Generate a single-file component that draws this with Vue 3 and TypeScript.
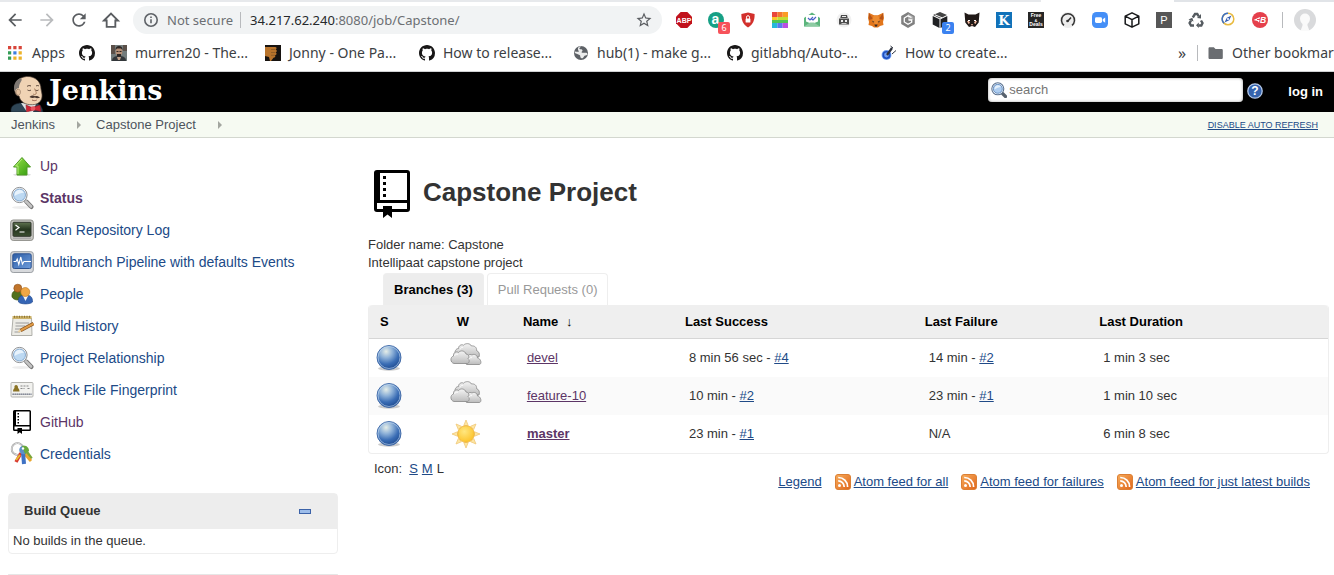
<script setup lang="ts">
interface Glyph { text: string; x: number; y: number; size: number; serif?: boolean; italic?: boolean; light?: boolean }
interface Extension { icon: string; glyphs?: Glyph[]; badge?: string; tone?: string }
interface Bookmark { icon: string; label: string; kind: 'apps' | 'bare' | 'full' }
interface Task { icon: string; label: string; visited?: boolean; current?: boolean }
interface Build { age: string; link?: string }
interface Branch { name: string; weather: string; success: Build; failure: Build; duration: string; primary?: boolean }

const navButtons = [
  { icon: 'back', label: 'Back' },
  { icon: 'forward', label: 'Forward' },
  { icon: 'reload', label: 'Reload' },
  { icon: 'home', label: 'Home' },
]

const extensions: Extension[] = [
  { icon: 'abp', glyphs: [{ text: 'ABP', x: 8, y: 10.6, size: 7 }] },
  { icon: 'askteal', glyphs: [{ text: 'a', x: 7.5, y: 12, size: 14 }], badge: '6', tone: 'red' },
  { icon: 'shield' },
  { icon: 'rainbow' },
  { icon: 'mail' },
  { icon: 'robot' },
  { icon: 'fox' },
  { icon: 'hexg' },
  { icon: 'darkcube', badge: '2', tone: 'blue' },
  { icon: 'cat' },
  { icon: 'kblue', glyphs: [{ text: 'K', x: 8, y: 13, size: 13, serif: true }] },
  { icon: 'deals', glyphs: [{ text: 'Free', x: 8, y: 5, size: 5 }, { text: '&', x: 8, y: 9.5, size: 4 }, { text: 'Deals', x: 8, y: 14, size: 5 }] },
  { icon: 'gauge' },
  { icon: 'zoomcam' },
  { icon: 'cube' },
  { icon: 'pgray', glyphs: [{ text: 'P', x: 8, y: 12, size: 11, light: true }] },
  { icon: 'recycle' },
  { icon: 'compass' },
  { icon: 'redb', glyphs: [{ text: 'B', x: 11, y: 11, size: 8.5, italic: true }] },
]

const bookmarks: Bookmark[] = [
  { icon: 'apps', label: 'Apps', kind: 'apps' },
  { icon: 'octocat', label: '', kind: 'bare' },
  { icon: 'portrait', label: 'murren20 - The...', kind: 'full' },
  { icon: 'fist', label: 'Jonny - One Pa...', kind: 'full' },
  { icon: 'octocat', label: 'How to release...', kind: 'full' },
  { icon: 'globe', label: 'hub(1) - make g...', kind: 'full' },
  { icon: 'octocat', label: 'gitlabhq/Auto-...', kind: 'full' },
  { icon: 'guitar', label: 'How to create...', kind: 'full' },
]

const tasks: Task[] = [
  { icon: 'up', label: 'Up', visited: true },
  { icon: 'search', label: 'Status', visited: true, current: true },
  { icon: 'terminal', label: 'Scan Repository Log' },
  { icon: 'monitor', label: 'Multibranch Pipeline with defaults Events' },
  { icon: 'people', label: 'People' },
  { icon: 'notepad', label: 'Build History' },
  { icon: 'search', label: 'Project Relationship' },
  { icon: 'idcard', label: 'Check File Fingerprint' },
  { icon: 'repo', label: 'GitHub', visited: true },
  { icon: 'keys', label: 'Credentials' },
]

const branches: Branch[] = [
  { name: 'devel', weather: 'cloud', success: { age: '8 min 56 sec', link: '#4' }, failure: { age: '14 min', link: '#2' }, duration: '1 min 3 sec' },
  { name: 'feature-10', weather: 'cloud', success: { age: '10 min', link: '#2' }, failure: { age: '23 min', link: '#1' }, duration: '1 min 10 sec' },
  { name: 'master', weather: 'sun', success: { age: '23 min', link: '#1' }, failure: { age: 'N/A' }, duration: '6 min 8 sec', primary: true },
]

const feeds = ['Atom feed for all', 'Atom feed for failures', 'Atom feed for just latest builds']
</script>

<template>
  <svg class="defs" aria-hidden="true">
    <defs>
      <radialGradient id="gOrb" cx="38%" cy="25%" r="75%">
        <stop offset="0" stop-color="#e6eee8" /><stop offset=".35" stop-color="#8fb2d8" />
        <stop offset=".7" stop-color="#3a6db5" /><stop offset="1" stop-color="#1f4c92" />
      </radialGradient>
      <radialGradient id="gSun" cx="40%" cy="35%" r="70%">
        <stop offset="0" stop-color="#ffe780" /><stop offset="1" stop-color="#fcc125" />
      </radialGradient>
      <linearGradient id="gCloud" x1="0" y1="0" x2="0" y2="1">
        <stop offset="0" stop-color="#f4f4f4" /><stop offset="1" stop-color="#bcbcbc" />
      </linearGradient>
      <linearGradient id="gRss" x1="0" y1="0" x2="1" y2="1">
        <stop offset="0" stop-color="#f7ad5c" /><stop offset="1" stop-color="#e0651a" />
      </linearGradient>
      <linearGradient id="gUp" x1="0" y1="0" x2="1" y2="1">
        <stop offset="0" stop-color="#9be34a" /><stop offset="1" stop-color="#2f9a0c" />
      </linearGradient>
      <linearGradient id="gMon" x1="0" y1="0" x2="1" y2="1">
        <stop offset="0" stop-color="#2c5da6" /><stop offset="1" stop-color="#6f9ddb" />
      </linearGradient>
      <linearGradient id="gTerm" x1="0" y1="0" x2="0" y2="1">
        <stop offset="0" stop-color="#5f7350" /><stop offset=".5" stop-color="#26361f" /><stop offset="1" stop-color="#3a4f30" />
      </linearGradient>
    </defs>

    <symbol id="back" viewBox="0 0 24 24"><path fill="#5a5d61" d="M20 11H7.83l5.59-5.59L12 4l-8 8 8 8 1.41-1.41L7.83 13H20z" /></symbol>
    <symbol id="forward" viewBox="0 0 24 24"><path fill="#b9bbbd" d="M4 11h12.17l-5.59-5.59L12 4l8 8-8 8-1.41-1.41L16.17 13H4z" /></symbol>
    <symbol id="reload" viewBox="0 0 24 24"><path fill="#5a5d61" d="M17.65 6.35C16.2 4.9 14.21 4 12 4c-4.42 0-7.99 3.58-7.99 8s3.57 8 7.99 8c3.73 0 6.84-2.55 7.73-6h-2.08c-.82 2.33-3.04 4-5.65 4-3.31 0-6-2.69-6-6s2.69-6 6-6c1.66 0 3.14.69 4.22 1.78L13 11h7V4z" /></symbol>
    <symbol id="home" viewBox="0 0 24 24"><path fill="none" stroke="#5a5d61" stroke-width="2.2" d="M3.6 12.6 12 4.2l8.4 8.4h-3.2v7.6H6.8v-7.6z" /></symbol>
    <symbol id="info" viewBox="0 0 16 16"><circle cx="8" cy="8" r="6.2" fill="none" stroke="#5f6368" stroke-width="1.6" /><path stroke="#5f6368" stroke-width="1.6" d="M8 7.2v4M8 4.4V6" /></symbol>
    <symbol id="star" viewBox="0 0 24 24"><path fill="#5a5d61" d="M22 9.24l-7.19-.62L12 2 9.19 8.63 2 9.24l5.46 4.73L5.82 21 12 17.27 18.18 21l-1.63-7.03zM12 15.4l-3.76 2.27 1-4.28-3.32-2.88 4.38-.38L12 6.1l1.71 4.04 4.38.38-3.32 2.88 1 4.28z" /></symbol>

    <symbol id="abp" viewBox="0 0 16 16"><path fill="#c1121c" d="M4.7 0h6.6L16 4.7v6.6L11.3 16H4.7L0 11.3V4.7z" /></symbol>
    <symbol id="askteal" viewBox="0 0 16 16"><circle cx="8" cy="8" r="8" fill="#17a085" /></symbol>
    <symbol id="shield" viewBox="0 0 16 16"><path fill="#d2302c" d="M8 .6 14.6 2c.2 6-1.600 10.500-6.600 13.600C3 12.500 1.200 8 1.400 2z" /><rect x="5.600" y="6.600" width="4.800" height="3.800" rx=".5" fill="#fff" /><path fill="none" stroke="#fff" d="M6.500 6.800V5.200a1.500 1.500 0 0 1 3 0v1.600" /></symbol>
    <symbol id="rainbow" viewBox="0 0 16 16"><path fill="#e9473c" d="M0 0h5.300v5H0z" /><path fill="#f5762f" d="M5.300 0h5.400v5H5.300z" /><path fill="#fb9c25" d="M10.700 0H16v5h-5.300z" /><path fill="#fbc62c" d="M0 5h5.300v3H0z" /><path fill="#c2dd35" d="M5.300 5H16v3H5.300z" /><path fill="#4fc653" d="M0 8h16v3H0z" /><path fill="#25b8dc" d="M0 11h5.300v5H0z" /><path fill="#587cec" d="M5.300 11h5.400v5H5.300z" /><path fill="#ba4fe0" d="M10.700 11H16v5h-5.300z" /></symbol>
    <symbol id="mail" viewBox="0 0 16 16"><path fill="#5cb57d" d="M0 6 8 .5 16 6v8.500H0z" /><path fill="#fff" d="M2 3h12v6.500L8 12 2 9.500z" /><path fill="#8dcba3" d="m0 14.500 6-4h4l6 4z" /><path fill="none" stroke="#4b62c8" stroke-width="1.200" d="m4 6 2 2 3-3M7.500 7 9 8l3-3" /></symbol>
    <symbol id="robot" viewBox="0 0 16 16"><circle cx="8" cy="8" r="7.500" fill="#f1f1f1" /><path fill="#4c4c4c" d="M5 3h6l.7 3H4.300zM3 6.500h10v6H3z" /><path fill="#eee" d="M5 8h2v2H5zm4 0h2v2H9zm-3.500 3h5v.8h-5zM6 4h4v1H6z" /></symbol>
    <symbol id="fox" viewBox="0 0 16 16"><path fill="#e2761b" d="m.8.800 5.200 2.500h4L15.200.800 16 6l-1 4 .5 3-3.500 1-2 1.500H6L4 14l-3.500-1 .5-3-1-4z" /><path fill="#b4531a" d="m.8.800 4 6L1 8zm14.400 0-4 6L15 8z" /><path fill="#ee8c30" d="M5.500 4h5L12 9l-4 4-4-4z" /><path fill="#3a2c25" d="M4 8.500 6.500 10 5 10.500zm8 0L9.500 10l1.500.5zM6.500 12.500h3l-.5 2H7z" /></symbol>
    <symbol id="hexg" viewBox="0 0 16 16"><path fill="#808080" d="m8 0 6.800 4v8L8 16l-6.800-4V4z" /><path fill="#a8a8a8" d="m8 1.500 5.500 3.200v3.300H8z" /><path fill="none" stroke="#fff" stroke-width="1.300" d="M11.500 5.500 8 3.800 4.300 6v4L8 12.200l3.700-2V8H8.500" /></symbol>
    <symbol id="darkcube" viewBox="0 0 16 16"><path fill="#444" d="m8 0 7 3-7 3.500L1 3z" /><path fill="#202124" d="M.7 4 7.500 7.300V16L.7 12.500zM15.300 4 8.500 7.300V16l6.800-3.500z" /><path stroke="#fff" d="m3 2.800 7 3" /></symbol>
    <symbol id="cat" viewBox="0 0 16 16"><path fill="#201917" d="m.5.500 4 2h7l4-2-.8 10L11 15l-3-1-3 1-3.700-4.500z" /><path fill="#efb59c" d="M3 9h2l1 2-1.500 1zm10 0h-2l-1 2 1.500 1zM7 12h2l-1 2z" /><path fill="#fff" d="M4 8h2v1H4zm6 0h2v1h-2z" /></symbol>
    <symbol id="kblue" viewBox="0 0 16 16"><path fill="#1172b9" d="M0 0h16v16H0z" /></symbol>
    <symbol id="deals" viewBox="0 0 16 16"><path fill="#262626" d="M0 0h16v16H0z" /></symbol>
    <symbol id="gauge" viewBox="0 0 16 16"><circle cx="8" cy="8" r="8" fill="#ededed" /><path fill="none" stroke="#333" stroke-width="1.500" d="M4 13.300a6.500 6.500 0 1 1 8 0M7.500 9.500 11 5.500" /><circle cx="7.500" cy="9" r="1.300" fill="#333" /></symbol>
    <symbol id="zoomcam" viewBox="0 0 16 16"><rect width="16" height="16" rx="4.500" fill="#458ff7" /><rect x="3" y="5.300" width="7" height="5.600" rx="1.400" fill="#fff" /><path fill="#fff" d="m10.700 7.300 2.500-1.800v5.200l-2.500-1.800z" /></symbol>
    <symbol id="cube" viewBox="0 0 16 16"><path fill="none" stroke="#17181a" stroke-width="1.500" stroke-linejoin="round" d="m8 .8 6.800 3.400v7.600L8 15.200l-6.800-3.400V4.200zM1.200 4.200 8 7.700l6.800-3.500M8 7.700v7.500" /></symbol>
    <symbol id="pgray" viewBox="0 0 16 16"><path fill="#565656" d="M0 0h16v16H0z" /></symbol>
    <symbol id="recycle" viewBox="0 0 16 16"><g fill="none" stroke="#555b60" stroke-width="2.400"><path d="M4.800 5.500 7 2h2.300l1.500 2.500" /><path d="m13 8.500 1.500 2.500-1.200 2.500H10.500" /><path d="M6 13.500H3L1.600 11 3 8.500" /></g><path fill="#555b60" d="m9 6 4 .5L13 2zm1.800 4.500v5.500L8 13.300zM.5 7.500l3.800-1.800L5.500 9.500z" /></symbol>
    <symbol id="compass" viewBox="0 0 16 16"><circle cx="8" cy="7" r="5.800" fill="none" stroke="#e9bb40" stroke-width="1.500" /><path fill="none" stroke="#3a6fc8" stroke-width="1.500" d="M8 1.200a5.800 5.800 0 0 0-4 10" /><path fill="#355fb4" d="m11.500 3.500-2.300 4.800-4.700 2.200L6.800 5.700z" /><circle cx="8" cy="7" r="1" fill="#fff" /></symbol>
    <symbol id="redb" viewBox="0 0 16 16"><circle cx="8" cy="8" r="8" fill="#e5404c" /><path fill="#fff" d="m1.500 8 6.500-3-.5 2H5v1h2.500L7 10.500 5.500 9z" /></symbol>
    <symbol id="avatar" viewBox="0 0 22 22"><circle cx="11" cy="11" r="11" fill="#d9dadc" /><path fill="#fafafa" d="M11 4.500a5 5 0 0 1 5 5c0 2.500-1.200 4.200-2.500 5.500v1.500l2 5.500h-9l2-5.500V15C7.200 13.700 6 12 6 9.500a5 5 0 0 1 5-5z" /></symbol>

    <symbol id="apps" viewBox="0 0 16 16"><path fill="#d8453a" d="M0 1h3.200v3.200H0zM5.300 1h3.200v3.200H5.300zM10.600 1h3.200v3.200h-3.200z" /><path fill="#349d56" d="M0 6.300h3.200v3.200H0zM0 11.600h3.200v3.200H0z" /><path fill="#3b7de0" d="M5.300 6.300h3.200v3.200H5.300z" /><path fill="#edb32a" d="M10.600 6.300h3.200v3.200h-3.200zM5.300 11.600h3.200v3.200H5.300zM10.600 11.600h3.200v3.200h-3.200z" /></symbol>
    <symbol id="octocat" viewBox="0 0 16 16"><path fill="#181717" d="M8 0C3.580 0 0 3.580 0 8c0 3.540 2.290 6.530 5.470 7.590.4.070.55-.17.55-.38 0-.19-.01-.82-.01-1.490-2.010.37-2.530-.49-2.690-.94-.09-.23-.48-.94-.82-1.130-.28-.15-.68-.52-.01-.53.63-.01 1.080.58 1.230.82.72 1.210 1.870.87 2.330.66.07-.52.28-.87.51-1.070-1.780-.2-3.640-.89-3.640-3.950 0-.87.31-1.590.82-2.150-.08-.2-.36-1.020.08-2.120 0 0 .67-.21 2.200.82.64-.18 1.320-.27 2-.27s1.360.09 2 .27c1.530-1.040 2.200-.82 2.200-.82.44 1.100.16 1.920.08 2.120.51.56.82 1.270.82 2.150 0 3.070-1.870 3.750-3.650 3.950.29.25.54.73.54 1.480 0 1.070-.01 1.930-.01 2.200 0 .21.15.46.55.38A8.010 8.010 0 0 0 16 8c0-4.420-3.580-8-8-8z" /></symbol>
    <symbol id="portrait" viewBox="0 0 16 16"><path fill="#737c7c" d="M0 0h16v16H0z" /><path fill="#5b5049" d="M0 0h4v9H0zM12 0h4v6h-4z" /><path fill="#33373a" d="M1 16c0-4 3-5 7-5s7 1 7 5z" /><ellipse cx="8" cy="6.500" rx="3.300" ry="4.300" fill="#b58f76" /><path fill="#2c2522" d="M4.500 5C4.500 2 6 1 8 1s3.500 1 3.500 4L10 3.500H6zM6 9h4v2.500H6zM5.500 6h2v1h-2zm3 0h2v1h-2z" /><path fill="#c0a089" d="M6 12h4l-1 3H7z" /></symbol>
    <symbol id="fist" viewBox="0 0 16 16"><path fill="#171310" d="M0 0h16v16H0z" /><path fill="#b9742c" d="M0 2h10c2 0 2 2 .5 2.500 2 .5 1.500 2.800 0 3 1.500.5 1.500 2.500-.5 2.800 1 1 0 2.400-1.500 2.400L6 16H5l-1-4-4-1z" /><path stroke="#7a5124" stroke-width=".6" d="M6 4.500h4M6 7.500h4M6 10.300h4" /></symbol>
    <symbol id="globe" viewBox="0 0 16 16"><circle cx="8" cy="8" r="7" fill="#5d6166" /><path fill="#fff" d="M8.500 1.500c-1 1-2.500 1-2 2.500 1 .6 2.500-.2 3 1.200.3 1.300-1.500 1.300-.8 2.300 1.300.8 3-.2 5.300.5l.5 1.500c-1.500 1.500-3 .6-3.500 2-.5 1-1.500 2.500-3 1.500-1.200-1-.2-2.300-1.500-3-1.500-.8-3-1.500-4.700-2L2 6.500C4 7 5.500 7 6 6.200 4.500 5 4.500 3 6 1.800z" opacity=".88" /></symbol>
    <symbol id="guitar" viewBox="0 0 16 16"><circle cx="5.500" cy="10" r="4.900" fill="#6e9df0" /><circle cx="5.500" cy="10" r="3.200" fill="none" stroke="#1c4fc0" stroke-width="1.600" /><path stroke="#2b2f3b" stroke-width="2.200" d="M6 10 11 3" /><path stroke="#2b2f3b" d="m9.500 1 2.500 2m-1 6 4-3.500" /></symbol>
    <symbol id="folder" viewBox="0 0 16 16"><path fill="#6a6d71" d="M.5 3.500c0-.8.500-1.300 1.300-1.300h4L7.500 4h6c.8 0 1.300.5 1.300 1.300v7.400c0 .8-.5 1.300-1.300 1.300H1.800c-.8 0-1.300-.5-1.300-1.300z" /></symbol>

    <symbol id="butler" viewBox="0 0 36 37"><path fill="#2f4656" stroke="#16242e" stroke-width=".6" d="M2 37v-3c1-4 4-5 9-6h16c4 1 6 4 7 9z" /><path fill="#dfe3e4" d="m12 28 6 9h6l3-8z" /><path fill="#f0d3b4" stroke="#4b3c34" stroke-width=".7" d="M6 17C4.500 9 8 2.500 17.500 1.500 26 1 32 6.500 32 14c.4 3 1.400 5 1 8-.5 4.500-4 7.500-9.500 7.700C16 30 11.500 27 10 21c-2 0-3.600-1.500-4-4z" /><path fill="#7d7772" d="M5.500 16.500C4 11 6 5 11.500 3c1.500.5 1.500 2 .5 3.500-1.500 2.500-2 4-2 6.500-2 0-3 1.500-4.500 3.500z" /><path fill="#e3c19f" stroke="#7a6250" stroke-width=".5" d="M8 14.500c2-1 3.500.500 3.500 2.500S10 21 8.500 20 6.500 16 8 14.500z" /><path fill="none" stroke="#463328" stroke-width=".9" d="M18 11.500c1-1 2.500-1.200 4-.5m5 0c1-.6 2-.6 3 0M18.500 15c1.200.8 2.500.8 3.500 0m4.500 0c1 .7 2 .7 3 0" /><path fill="none" stroke="#9b7052" stroke-width=".8" d="M25.500 13.500c.5 2 2.500 4 1.500 5.500-.8.800-2 .6-3 0" /><path fill="#4a382f" d="M20.500 22c2-2 4.500-1.800 5.500-.8 1.500-.6 3.500-.2 5 1.600-2 .6-4 .6-5-.2-1.600.8-4 .6-5.500-.6z" /><path fill="none" stroke="#8c4a37" stroke-width=".8" d="M23 25c1.500.8 3.500.8 4.800 0" /><path fill="#cf2434" stroke="#7c1620" stroke-width=".5" d="m17 30 6 2.500 8-2.500 1 6.500-7-1.500-7.500 2z" /><circle cx="24" cy="33.500" r="2.300" fill="#ea5560" /></symbol>

    <symbol id="search" viewBox="0 0 24 24"><ellipse cx="11" cy="21.500" rx="9" ry="1.500" fill="#eee" /><path stroke="#777" stroke-width="4.400" stroke-linecap="round" d="m16.500 15.800 4.800 5" /><path stroke="#c4c4c4" stroke-width="2.600" stroke-linecap="round" d="m16 15.300 5 5.200" /><circle cx="9.500" cy="9" r="7.600" fill="#fff" stroke="#8a8d90" /><circle cx="9.500" cy="9" r="6" fill="#bdd9f2" stroke="#6f98c4" stroke-width=".8" /><path fill="#e8f3fc" d="M4.500 9a5 5 0 0 1 9.500-2.300C11 7 7 8 4.500 10z" /></symbol>
    <symbol id="find" viewBox="0 0 16 16"><path stroke="#59636e" stroke-width="3.200" stroke-linecap="round" d="m11.500 11.500 3 3" /><circle cx="6.800" cy="6.800" r="6" fill="#fff" stroke="#5b7290" stroke-width="1.100" /><circle cx="6.800" cy="6.800" r="4.500" fill="#aecdf0" stroke="#5c88bd" stroke-width=".9" /><path fill="#e4f0fb" d="M3.500 6.500a3.500 3.500 0 0 1 6.500-1.500C8 5 5.500 6 3.500 7.500z" /></symbol>
    <symbol id="up" viewBox="0 0 24 24"><ellipse cx="12" cy="20.800" rx="9" ry="1.500" fill="#ddd" /><path fill="url(#gUp)" stroke="#4f9a25" d="M12 3.500 20.500 13H17v8H7v-8H3.500z" /><path fill="none" stroke="#b6ef7d" d="M12 5 5.600 12H8v8" /></symbol>
    <symbol id="terminal" viewBox="0 0 24 24"><rect x=".7" y="2" width="22.600" height="20.400" rx="2.500" fill="#c9c9c4" stroke="#8e8e89" /><rect x="3" y="4.300" width="18" height="14" rx=".8" fill="url(#gTerm)" stroke="#30362c" /><path fill="none" stroke="#fff" stroke-width="1.200" d="m5.500 7 3.500 2.600-3.500 2.600M9.500 14h5" /><path fill="#aaa" d="M3 19.500h18V21H3z" /></symbol>
    <symbol id="monitor" viewBox="0 0 24 24"><rect x=".7" y="1.700" width="22.600" height="20.800" rx="2.500" fill="#d7d9dc" stroke="#9b9fa4" /><rect x="2.800" y="3.800" width="18.400" height="14.700" rx="1.500" fill="url(#gMon)" stroke="#2c5290" /><path fill="none" stroke="#fff" stroke-width="1.100" d="M3.500 11.500H6l1.200-2.500 1.600 5.500 2-7.500 1.600 7 1.600-2.500H21" /></symbol>
    <symbol id="people" viewBox="0 0 24 24"><path fill="#51711d" stroke="#3c5513" stroke-width=".7" d="M2 15c-.5-5 2-6.500 5.500-6.500S13 10 13 15c-1 4-9 4-11 0z" /><circle cx="7.800" cy="6.200" r="4" fill="#c1752b" stroke="#8c4e16" stroke-width=".6" /><path fill="#3565b5" stroke="#224a8f" stroke-width=".7" d="M8.500 20c-.5-5 2-7 7-7s7 2 7 7c-2 2.500-12 2.500-14 0z" /><path fill="#f5f5f5" d="m13 14 2.500 5 2.500-5z" /><circle cx="15.300" cy="10" r="4.500" fill="#efa746" stroke="#b8741f" stroke-width=".6" /></symbol>
    <symbol id="notepad" viewBox="0 0 24 24"><path fill="#ecebe5" stroke="#b0b0aa" d="M3 4h18.500l.5 17.500H1.500z" /><path fill="#cdb36a" d="M2.500 2h19v3h-19z" /><path stroke="#8a7434" stroke-dasharray="1 1.500" stroke-width="2" d="M4 2.800h17" /><path stroke="#9a9a9a" d="M5.500 9H19M5.500 12H15M5 15h5M4.500 18H10" /><path stroke="#84501c" stroke-width="3.600" d="m10.500 16.500 13-7" /><path stroke="#e19b45" stroke-width="2.200" d="m11 16.300 12.500-6.700" /><path fill="#ecd1a0" d="m7.500 18.200 2.300-3.200 1.500 3z" /></symbol>
    <symbol id="idcard" viewBox="0 0 24 24"><rect x="1" y="4.500" width="22" height="14.500" rx="1" fill="#f2f2ef" stroke="#b4b4b0" /><path fill="#8b7325" d="M3 13.500c0-2 1-3 1.500-3.500-1-4 4-4 3.500 0 .8.500 1.500 1.500 1.500 3.500z" /><path stroke="#888" d="M10.500 8h8M10.500 10.500h4m3 0h3" stroke-dasharray="2 1" /><path fill="#a9adb7" d="M2 15.500h20V17H2z" /><path stroke="#7b7f88" stroke-dasharray="1 1" d="M3 16.200h17" /></symbol>
    <symbol id="repo" viewBox="0 0 48 48"><path fill-rule="evenodd" d="M9 0h30a3 3 0 0 1 3 3v36a3 3 0 0 1-3 3H24v6l-4.500-3.500L15 48v-6H9a3 3 0 0 1-3-3V3a3 3 0 0 1 3-3zm3 3v27h27V3zM9 33v6h6v-3h9v3h15v-6z" /><path d="M15 6h3v3h-3zm0 6h3v3h-3zm0 6h3v3h-3zm0 6h3v3h-3z" /></symbol>
    <symbol id="keys" viewBox="0 0 24 24"><circle cx="7.500" cy="7" r="5.800" fill="none" stroke="#909090" stroke-width="1.800" /><circle cx="7.500" cy="7" r="5.800" fill="none" stroke="#ececec" stroke-width=".9" /><path stroke="#7aa638" stroke-width="4" d="m14 7 7 10" /><path stroke="#d93a2f" stroke-width="3.400" d="m11 11-5 9" /><path stroke="#e9a62e" stroke-width="3" d="m15 12 6 7" /><path stroke="#3f72c4" stroke-width="4" d="m13 10 1 12" /><circle cx="13.500" cy="8" r="4.300" fill="#5d8fc8" /><path fill="#69a93b" d="M12 4c4-1 7 1 7 5l-4 3z" /><circle cx="13" cy="6.500" r="1.200" fill="#fff" /><path stroke="#e4bf34" stroke-width="2" d="m10 13-4 5" /></symbol>

    <symbol id="orb" viewBox="0 0 32 32"><ellipse cx="16" cy="26.500" rx="11" ry="2.200" fill="#ccc" /><circle cx="16" cy="15.500" r="12" fill="url(#gOrb)" stroke="#3c66a6" stroke-width=".9" /><circle cx="16" cy="15.500" r="11" fill="none" stroke="#c7dcf2" stroke-opacity=".6" /></symbol>
    <symbol id="cloud" viewBox="0 0 32 32"><g fill="url(#gCloud)" stroke="#909090" stroke-width=".9"><path d="M5.500 16C4 12.500 6 9.500 8.500 9.500c0-3 3-4.500 5-3.300C15.500 4 20 4 21.500 7c3-.5 5.500 1.500 5 4.500 2.500 1 3.500 3.500 2.500 6.500z" /><path d="M17 25.500c-2.500-.5-3-4.500 0-5.500-.5-3.500 2.500-5.500 5-4 2-1.500 5.500 0 5.500 3 3.500.5 4.500 6 2 6.500z" /><path d="M4 24.500c-4-1-4-6.500-.5-7.500-.5-3.500 3-5 5-3.500 2-2.500 6.500-2 7.500 1.500 3 .3 3.500 3.500 2 4.500 2 1.500 1.500 5-1 5z" /></g><path fill="none" stroke="#fff" stroke-width=".8" d="M4.500 17c.5-1.500 2-2.300 3.500-1.600M10 10.500c.5-1.500 1.500-2.500 3-2M19 20.500c.5-1.500 1.500-2.300 3-1.800" /></symbol>
    <symbol id="sun" viewBox="0 0 32 32"><path fill="#fde6a4" stroke="#f0c878" stroke-width=".8" d="m16 2 2.200 5.500h-4.400zM16 30l-2.200-5.500h4.400zM2 16l5.500-2.200v4.400zM30 16l-5.500 2.200v-4.400zM6 6l5.500 2.300-3.200 3.200zM26 6l-2.300 5.500-3.200-3.200zM6 26l2.300-5.500 3.200 3.200zM26 26l-5.500-2.300 3.200-3.200z" /><circle cx="16" cy="16" r="8.300" fill="url(#gSun)" stroke="#eeb23a" stroke-width=".8" /></symbol>
    <symbol id="rss" viewBox="0 0 16 16"><rect x=".5" y=".5" width="15" height="15" rx="2.500" fill="url(#gRss)" stroke="#dc7f34" /><circle cx="4.500" cy="11.600" r="1.500" fill="#fff" /><path fill="none" stroke="#fff" stroke-width="1.700" d="M3.200 6.900a6 6 0 0 1 6 6M3.200 3.500a9.300 9.300 0 0 1 9.400 9.400" /></symbol>
    <symbol id="help" viewBox="0 0 16 16"><circle cx="8" cy="8" r="7.200" fill="#3563ad" stroke="#b4c8e8" stroke-width="1.300" /></symbol>
    <symbol id="minus" viewBox="0 0 12 5"><rect x=".5" y=".5" width="11" height="4" fill="#9dbdea" stroke="#3b62a8" /></symbol>
  </svg>

  <div class="window">
    <div class="browser">
      <div class="tabstrip"><span class="strip-left"></span><span class="strip-right"></span></div>
      <div class="toolbar">
        <button v-for="b in navButtons" :key="b.icon" class="tool" :aria-label="b.label">
          <svg class="s20"><use :href="'#' + b.icon" /></svg>
        </button>
        <div class="omnibox">
          <svg class="s16"><use href="#info" /></svg>
          <span class="insecure">Not secure</span>
          <span class="sep"></span>
          <span class="url"><b>34.217.62.240</b>:8080/job/Capstone/</span>
          <button class="tool" aria-label="Bookmark this page"><svg class="s18"><use href="#star" /></svg></button>
        </div>
        <button v-for="e in extensions" :key="e.icon" class="tool" :aria-label="e.icon">
          <svg class="s16" viewBox="0 0 16 16">
            <use :href="'#' + e.icon" />
            <text v-for="g in e.glyphs" :key="g.text" class="glyph" :class="{ serif: g.serif, italic: g.italic, light: g.light }" :x="g.x" :y="g.y" :font-size="g.size">{{ g.text }}</text>
          </svg>
          <span v-if="e.badge" class="badge" :class="e.tone">{{ e.badge }}</span>
        </button>
        <span class="sep toolbar-sep"></span>
        <button class="profile" aria-label="Profile"><svg class="s22"><use href="#avatar" /></svg></button>
      </div>
      <nav class="bookmarks">
        <a v-for="(b, i) in bookmarks" :key="i" href="#" class="bookmark" :class="b.kind" :aria-label="b.label || 'GitHub'">
          <svg class="s16"><use :href="'#' + b.icon" /></svg><span v-if="b.label">{{ b.label }}</span>
        </a>
        <div class="other">
          <button class="more" aria-label="More bookmarks">»</button>
          <span class="sep"></span>
          <a href="#" class="bookmark"><svg class="s16"><use href="#folder" /></svg><span>Other bookmarks</span></a>
        </div>
      </nav>
    </div>

    <header class="header">
      <a href="#" class="brand"><svg class="butler"><use href="#butler" /></svg><span>Jenkins</span></a>
      <label class="searchbox"><svg class="s16"><use href="#find" /></svg><input type="text" placeholder="search" aria-label="search" /></label>
      <a href="#" class="help" aria-label="Help"><svg class="s16" viewBox="0 0 16 16"><use href="#help" /><text class="glyph" x="8" y="12" font-size="12">?</text></svg></a>
      <a href="#" class="login">log in</a>
    </header>

    <nav class="crumbs">
      <a href="#">Jenkins</a><span class="arrow"></span>
      <a href="#">Capstone Project</a><span class="arrow"></span>
      <a href="#" class="refresh">DISABLE AUTO REFRESH</a>
    </nav>

    <div class="page">
      <aside class="side">
        <nav class="tasks">
          <a v-for="t in tasks" :key="t.label" href="#" class="task" :class="{ visited: t.visited, current: t.current }">
            <svg class="s24"><use :href="'#' + t.icon" /></svg><span>{{ t.label }}</span>
          </a>
        </nav>
        <section class="pane">
          <h2>Build Queue<button aria-label="Collapse"><svg class="minus"><use href="#minus" /></svg></button></h2>
          <p>No builds in the queue.</p>
        </section>
        <section class="next-pane"></section>
      </aside>

      <main class="main">
        <h1><svg class="s48"><use href="#repo" /></svg><span>Capstone Project</span></h1>
        <p class="desc">Folder name: Capstone<br />Intellipaat capstone project</p>
        <div class="tabs">
          <a href="#" class="tab active">Branches (3)</a>
          <a href="#" class="tab">Pull Requests (0)</a>
        </div>
        <table>
          <colgroup><col class="c-s" /><col class="c-w" /><col class="c-name" /><col class="c-ok" /><col class="c-fail" /><col /></colgroup>
          <thead>
            <tr><th>S</th><th>W</th><th>Name <span class="sort">↓</span></th><th>Last Success</th><th>Last Failure</th><th>Last Duration</th></tr>
          </thead>
          <tbody>
            <tr v-for="b in branches" :key="b.name">
              <td class="icon"><svg class="s32"><use href="#orb" /></svg></td>
              <td class="icon"><svg class="s32" :class="b.weather"><use :href="'#' + b.weather" /></svg></td>
              <td><a href="#" class="visited" :class="{ primary: b.primary }">{{ b.name }}</a></td>
              <td>{{ b.success.age }}<template v-if="b.success.link"> - <a href="#">{{ b.success.link }}</a></template></td>
              <td>{{ b.failure.age }}<template v-if="b.failure.link"> - <a href="#">{{ b.failure.link }}</a></template></td>
              <td>{{ b.duration }}</td>
            </tr>
          </tbody>
        </table>
        <div class="foot">
          <div class="sizes"><span>Icon:</span><a href="#">S</a><a href="#">M</a><span>L</span></div>
          <div class="feeds">
            <a href="#">Legend</a>
            <span v-for="f in feeds" :key="f" class="feed"><svg class="s16"><use href="#rss" /></svg><a href="#">{{ f }}</a></span>
          </div>
        </div>
      </main>
    </div>
  </div>
</template>

<style>
body { margin: 0; background: #fff; }
</style>

<style scoped>
* { box-sizing: border-box; }
.defs { position: absolute; width: 0; height: 0; }
.window { overflow: hidden; font-family: "Liberation Sans", Arial, sans-serif; font-size: 13px; line-height: 18px; color: #333; }
svg { display: block; flex: none; }
button { border: 0; padding: 0; background: none; font: inherit; color: inherit; }
a { color: #204a87; }
.s16 { width: 16px; height: 16px; }
.s18 { width: 18px; height: 18px; }
.s20 { width: 20px; height: 20px; }
.s22 { width: 22px; height: 22px; }
.s24 { width: 24px; height: 24px; }
.s32 { width: 32px; height: 32px; }
.s48 { width: 48px; height: 48px; }
.glyph { fill: #fff; font-family: "Liberation Sans", Arial, sans-serif; font-weight: 700; text-anchor: middle; }
.glyph.serif { font-family: "DejaVu Serif", serif; }
.glyph.italic { font-style: italic; }
.glyph.light { font-weight: 400; }

.browser { font-family: "Noto Sans", sans-serif; font-size: 14px; color: #3c4043; border-bottom: 1px solid #cfd1d3; }
.tabstrip { display: flex; justify-content: space-between; height: 2px; }
.strip-left { width: 78%; background: #e7e9ec; }
.strip-right { width: 12%; background: #e1e4e8; }
.toolbar { display: flex; align-items: center; gap: 8px; height: 36px; padding: 0 18px 0 3px; }
.tool { position: relative; display: flex; align-items: center; justify-content: center; flex: none; width: 24px; height: 24px; }
.omnibox { display: flex; align-items: center; flex: 1; min-width: 0; height: 28px; margin: 0 2px; padding: 0 6px 0 10px; border-radius: 14px; background: #f1f3f4; font-size: 13px; }
.insecure { margin: 0 7px 0 8px; color: #6c6f73; }
.sep { flex: none; width: 1px; height: 16px; background: #b8babd; }
.url { flex: 1; margin-left: 9px; color: #6c6f73; white-space: nowrap; }
.url b { font-weight: 400; color: #25282b; }
.badge { position: absolute; left: 14px; top: 14px; width: 12px; height: 12px; border-radius: 2px; color: #fff; font-size: 9px; line-height: 12px; text-align: center; }
.badge.red { background: #f7525a; }
.badge.blue { background: #3b82f0; }
.toolbar-sep { margin: 0 3px 0 2px; }
.profile { flex: none; }
.bookmarks { display: flex; align-items: center; height: 33px; padding: 0 0 4px 8px; }
.bookmark { display: flex; align-items: center; gap: 8px; flex: none; color: #3c4043; text-decoration: none; white-space: nowrap; }
.apps { width: 71px; }
.bare { width: 32px; }
.full { width: 154px; }
.other { display: flex; align-items: center; gap: 10px; flex: none; margin-left: auto; margin-right: -14px; }
.more { width: 10px; font-size: 16px; }

.header { display: flex; align-items: center; height: 40px; padding: 0 11px 0 9px; background: #000; }
.brand { display: flex; align-items: center; gap: 4px; margin-right: auto; color: #fff; font: 700 27px/34px "DejaVu Serif", serif; text-decoration: none; }
.brand span { padding-bottom: 3px; }
.butler { width: 36px; height: 37px; margin-top: 3px; }
.searchbox { display: flex; align-items: center; width: 255px; height: 24px; margin-bottom: 4px; padding: 0 3px; border-radius: 4px; background: #fff; box-shadow: inset 0 0 3px #999; }
.searchbox input { flex: 1; min-width: 0; border: 0; padding: 0 2px; outline: 0; background: none; font: inherit; }
.searchbox input::placeholder { color: #757575; }
.help { margin: 0 25px 2px 4px; }
.login { color: #fff; font-weight: 700; text-decoration: none; }

.crumbs { display: flex; align-items: center; height: 26px; padding: 0 16px 0 11px; border-bottom: 1px solid #d3d7cf; background: #f6faf2; }
.crumbs a { color: #4d545d; text-decoration: none; }
.arrow { width: 0; height: 0; margin: 0 15px 0 22px; border: 4px solid transparent; border-left-color: #a3a6a0; border-right-width: 0; }
.crumbs .refresh { margin-left: auto; color: #204a87; font-size: 9px; text-decoration: underline; }

.page { display: flex; align-items: flex-start; gap: 30px; padding: 12px 5px 0 8px; }
.side { flex: none; width: 330px; }
.task { display: flex; align-items: center; gap: 6px; height: 32px; padding-left: 2px; font-size: 14px; text-decoration: none; }
.visited { color: #5c3566; }
.current { font-weight: 700; }
.pane { margin-top: 23px; border: 1px solid #eee; border-radius: 4px; }
.pane h2 { display: flex; align-items: center; justify-content: space-between; height: 35px; margin: 0; padding: 0 26px 1px 15px; background: #ededed; font-size: 13px; }
.minus { width: 12px; height: 5px; }
.pane p { margin: 0; padding: 3px 4px; }
.next-pane { margin-top: 20px; border-top: 1px solid #e6e6e6; border-radius: 4px; }

.main { flex: 1; min-width: 0; padding-top: 20px; }
h1 { display: flex; align-items: center; gap: 7px; margin: 0; font-size: 26px; line-height: 32px; }
h1 span { padding-bottom: 4px; }
.desc { margin: 18px 0 1px; }
.tabs { display: flex; gap: 3px; padding-left: 15px; }
.tab { height: 32px; padding: 7px 10px 0; border: 1px solid #eee; border-bottom: 0; border-radius: 4px 4px 0 0; color: #999; text-decoration: none; }
.tab.active { background: #ededed; color: #000; font-weight: 700; }
table { width: 100%; table-layout: fixed; border: 1px solid #eee; border-top: 0; border-spacing: 0; border-radius: 4px; }
.c-s { width: 8%; }
.c-w { width: 6.9%; }
.c-name { width: 16.9%; }
.c-ok { width: 25%; }
.c-fail { width: 18.2%; }
th { height: 34px; padding: 0 11px; border-bottom: 1px solid #d6d6d6; background: #efefef; color: #000; text-align: left; }
th:first-child { border-top-left-radius: 4px; }
th:last-child { border-top-right-radius: 4px; }
.sort { margin-left: 4px; font-weight: 400; }
td { height: 38px; padding: 0 15px; }
td.icon { padding: 0 4px; }
.cloud { margin-bottom: 6px; }
tbody tr:nth-child(even) { background: #fafafa; }
.primary { font-weight: 700; }
.foot { display: flex; justify-content: space-between; padding: 6px 19px 0 6px; }
.sizes { display: flex; gap: 4px; }
.sizes span:first-child { margin-right: 3px; }
.feeds { display: flex; gap: 13px; padding-top: 13px; }
.feed { display: flex; align-items: center; gap: 3px; }
</style>
